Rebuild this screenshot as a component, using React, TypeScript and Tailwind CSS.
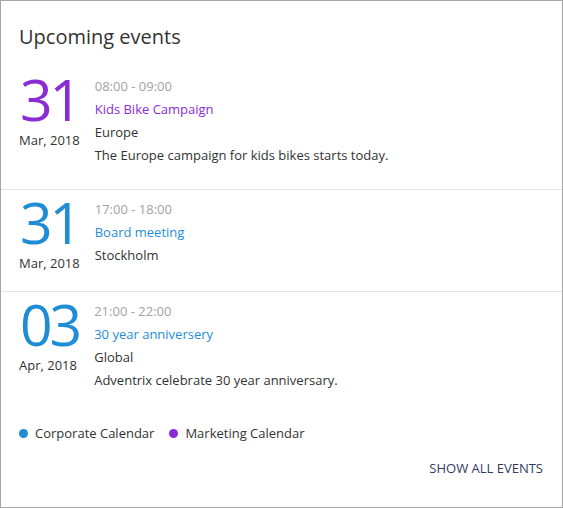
const events = [
  {
    day: "31",
    month: "Mar, 2018",
    time: "08:00 - 09:00",
    title: "Kids Bike Campaign",
    location: "Europe",
    description: "The Europe campaign for kids bikes starts today.",
    color: "purple",
  },
  {
    day: "31",
    month: "Mar, 2018",
    time: "17:00 - 18:00",
    title: "Board meeting",
    location: "Stockholm",
    description: "",
    color: "blue",
  },
  {
    day: "03",
    month: "Apr, 2018",
    time: "21:00 - 22:00",
    title: "30 year anniversery",
    location: "Global",
    description: "Adventrix celebrate 30 year anniversary.",
    color: "blue",
  },
];

export default function App() {
  return (
    <div className="w-[563px] h-[508px] bg-white border border-[#a6a6a6] flex flex-col font-['Open_Sans',sans-serif] text-[13px] text-[#333]">
      <h2 className="px-[18px] pt-[21px] mb-[15px] text-[20px] leading-[30px] text-[#333]">
        Upcoming events
      </h2>

      <div className="flex flex-col">
        {events.map((ev, i) => (
          <div
            key={i}
            className={
              "flex gap-[15px] px-[18px] pt-[7px] pb-4" +
              (i < events.length - 1 ? " border-b border-[#e3e3e3]" : "")
            }
          >
            <div className="flex flex-col items-start">
              <span
                className={
                  "text-[57px] font-normal tracking-[-3px] leading-[50px] pl-px " +
                  (ev.color === "purple" ? "text-[#8b2bd6]" : "text-[#1f8dd6]")
                }
              >
                {ev.day}
              </span>
              <span className="leading-[23px] whitespace-nowrap mt-[5px]">{ev.month}</span>
            </div>
            <div className="flex flex-col mt-px leading-[23px]">
              <span className="text-[#a3a3a3]">{ev.time}</span>
              <span className={ev.color === "purple" ? "text-[#8b2bd6]" : "text-[#1f8dd6]"}>
                {ev.title}
              </span>
              <span>{ev.location}</span>
              {ev.description && <span className="mb-[6px]">{ev.description}</span>}
            </div>
          </div>
        ))}
      </div>

      <div className="flex items-center gap-[15px] px-[18px] mt-2 leading-[23px]">
        <div className="flex items-center gap-[7px]">
          <span className="w-[9px] h-[9px] rounded-full bg-[#1f8dd6]" />
          <span>Corporate Calendar</span>
        </div>
        <div className="flex items-center gap-[7px]">
          <span className="w-[9px] h-[9px] rounded-full bg-[#8b2bd6]" />
          <span>Marketing Calendar</span>
        </div>
      </div>

      <div className="flex justify-end px-[19px] mt-3">
        <button className="leading-[23px] uppercase text-[#2f3b63]">Show all events</button>
      </div>
    </div>
  );
}
